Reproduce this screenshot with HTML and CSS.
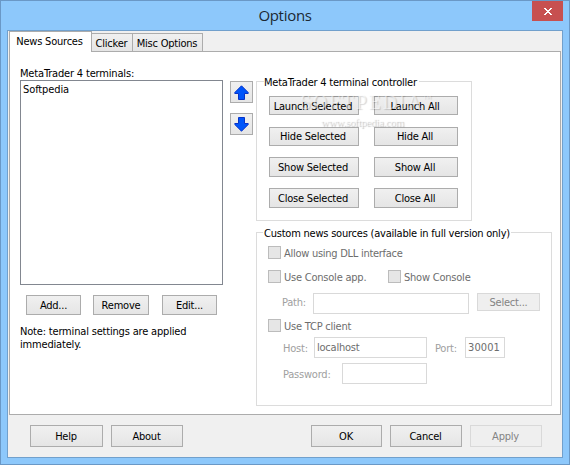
FILE: index.html
```html
<!DOCTYPE html>
<html lang="en">
<head>
<meta charset="utf-8">
<title>Options</title>
<link rel="stylesheet" href="styles.css">
</head>
<body>
<div class="window">
  <header class="titlebar">
    <h1>Options</h1>
    <button class="close" aria-label="Close"><svg width="8" height="7" viewBox="0 0 8 7" shape-rendering="crispEdges"><path fill="#fff" d="M0 0h2v1h1v1h2v-1h1v-1h2v1h-1v1h-1v1h-1v1h1v1h1v1h1v1h-2v-1h-1v-1h-2v1h-1v1h-2v-1h1v-1h1v-1h1v-1h-1v-1h-1v-1h-1z"/></svg></button>
  </header>
  <main class="client">
    <nav class="tabs">
      <span class="tab active">News Sources</span>
      <span class="tab clicker">Clicker</span>
      <span class="tab misc">Misc Options</span>
    </nav>
    <div class="page">
      <section class="left">
        <label class="list-label">MetaTrader 4 terminals:</label>
        <div class="list">Softpedia</div>
        <div class="list-actions">
          <button class="btn">Add...</button>
          <button class="btn remove">Remove</button>
          <button class="btn">Edit...</button>
        </div>
        <p class="note">Note: terminal settings are applied<br>immediately.</p>
      </section>
      <div class="arrows">
        <button class="btn arrow" aria-label="Up"><svg width="15" height="15" viewBox="0 0 15 15"><path fill="#0055fa" stroke="#0632c8" d="M7.5 .8L14.2 7.5V8.5H10.5V14.5H4.5V8.5H.8V7.5Z"/></svg></button>
        <button class="btn arrow" aria-label="Down"><svg width="15" height="15" viewBox="0 0 15 15"><path fill="#0055fa" stroke="#0632c8" d="M7.5 14.2L14.2 7.5V6.5H10.5V.5H4.5V6.5H.8V7.5Z"/></svg></button>
      </div>
      <div class="right">
        <section class="group controller">
          <h2>MetaTrader 4 terminal controller</h2>
          <div class="grid">
            <button class="btn">Launch Selected</button><button class="btn">Launch All</button>
            <button class="btn">Hide Selected</button><button class="btn">Hide All</button>
            <button class="btn">Show Selected</button><button class="btn">Show All</button>
            <button class="btn">Close Selected</button><button class="btn">Close All</button>
          </div>
          <div class="mark"><div class="mark-name">SOFTPEDIA<sup>™</sup></div><div class="mark-url">www.softpedia.com</div></div>
        </section>
        <section class="group custom">
          <h2>Custom news sources (available in full version only)</h2>
          <div class="row dll"><i class="check"></i><span class="text">Allow using DLL interface</span></div>
          <div class="row console"><i class="check"></i><span class="text use">Use Console app.</span><i class="check"></i><span class="text">Show Console</span></div>
          <div class="row path"><span class="dim">Path:</span><div class="field"></div><button class="btn off select">Select...</button></div>
          <div class="row tcp"><i class="check"></i><span class="text">Use TCP client</span></div>
          <div class="row host"><span class="dim">Host:</span><div class="field">localhost</div><span class="dim port">Port:</span><div class="field num">30001</div></div>
          <div class="row pass"><span class="dim">Password:</span><div class="field"></div></div>
        </section>
      </div>
    </div>
    <footer class="footer">
      <button class="btn help">Help</button>
      <button class="btn">About</button>
      <button class="btn ok">OK</button>
      <button class="btn">Cancel</button>
      <button class="btn off">Apply</button>
    </footer>
  </main>
</div>
</body>
</html>
```
FILE: styles.css
```css
* { box-sizing: border-box; }
body { margin: 0; font: 11px/13px "DejaVu Sans Condensed", "DejaVu Sans", sans-serif; font-stretch: condensed; letter-spacing: -.22px; color: #000; white-space: nowrap; }
h1, h2, p { margin: 0; font-weight: normal; }
button { font: inherit; letter-spacing: inherit; color: inherit; padding: 0; margin: 0; }
.window { width: 570px; height: 465px; border: 1px solid #6a98c6; background: #8dc8fb; padding: 0 6px; }
.titlebar { height: 29px; display: flex; justify-content: center; position: relative; }
h1 { font: 15px/29px "Open Sans", sans-serif; letter-spacing: -.3px; color: #1c2833; }
.close { position: absolute; right: 0; top: 0; width: 31px; height: 20px; border: 0; background: #c75050; display: flex; align-items: center; justify-content: center; }
.client { height: 428px; border: 1px solid #71a0cc; background: #f0f0f0; padding: 0 1px; }
.tabs { display: flex; align-items: flex-end; height: 21px; position: relative; margin-bottom: -1px; }
.tab { height: 19px; border: 1px solid #acacac; border-left-width: 0; background: linear-gradient(#f0f0f0, #e5e5e5); text-align: center; line-height: 19px; }
.tab.active { width: 83px; height: 21px; border-left-width: 1px; border-bottom: 0; background: #fff; line-height: 19px; padding-right: 2px; }
.clicker { width: 41px; padding-right: 1px; }
.misc { width: 70px; padding-right: 1px; }
.page { height: 364px; border: 1px solid #acacac; background: #fff; display: flex; padding: 0 8px 0 10px; }
.left { width: 203px; padding-top: 15px; }
.list-label { display: block; height: 13px; letter-spacing: -.17px; }
.list { height: 205px; border: 1px solid #828790; padding: 2px; letter-spacing: -.1px; }
.list-actions { display: flex; gap: 12px; padding: 10px 0 0 6px; }
.btn { height: 20px; border: 1px solid #acacac; background: linear-gradient(#f0f0f0, #e5e5e5); display: flex; align-items: center; justify-content: center; }
.list-actions .btn { width: 55px; }
.list-actions .remove { width: 56px; margin-right: 1px; }
.note { padding-top: 10px; letter-spacing: -.18px; }
.arrows { width: 23px; margin-left: 7px; padding-top: 29px; display: grid; gap: 10px; align-content: start; }
.arrow { height: 22px; }
.right { margin-left: 3px; padding-top: 29px; }
.group { border: 1px solid #dcdcdc; position: relative; }
.group h2 { font: inherit; width: max-content; height: 13px; margin-top: -6px; background: #fff; }
.controller { width: 216px; height: 140px; }
.controller h2 { margin-left: 7px; padding-right: 2px; }
.grid { display: grid; grid-template-columns: 90px 84px; grid-template-rows: 20px 19px 20px 20px; column-gap: 15px; row-gap: 11px; padding: 7px 0 0 12px; }
.grid .btn { padding-right: 2px; }
.grid .btn:nth-child(-n+4) { height: 19px; }
.grid .btn:nth-child(-n+2) { padding-top: 1px; }
.custom { width: 296px; height: 174px; margin-top: 11px; color: #6d6d6d; }
.custom h2 { margin-left: 6px; color: #000; padding: 0 1px; }
.row { display: flex; align-items: center; padding-left: 11px; }
.text { height: 13px; line-height: 15px; }
.check { width: 13px; height: 13px; border: 1px solid #bcbcbc; background: #e6e6e6; margin-right: 3px; }
.dll { margin-top: 6px; }
.dll .text { letter-spacing: -.27px; }
.console { margin-top: 11px; }
.use { width: 104px; }
.path { margin-top: 10px; align-items: flex-start; height: 21px; padding-left: 25px; }
.path .dim { width: 31px; padding-top: 2px; }
.dim { color: #a0a0a0; line-height: 15px; }
.field { width: 156px; height: 21px; border: 1px solid #d9d9d9; padding: 3px 2px; }
.off { color: #838383; border-color: #d9d9d9; background: #efefef; }
.select { width: 63px; height: 18px; margin-left: 8px; }
.tcp { margin-top: 5px; }
.host { margin-top: 5px; padding-left: 26px; }
.host .dim { width: 31px; padding-top: 1px; }
.host .field { width: 113px; }
.host .port { margin-left: 8px; width: 30px; line-height: 17px; }
.host .num { width: 40px; letter-spacing: .1px; }
.pass { margin-top: 5px; padding-left: 26px; }
.pass .dim { width: 59px; padding-top: 1px; }
.pass .field { width: 85px; }
.footer { display: flex; gap: 8px; padding: 10px 0 0 21px; }
.footer .btn { width: 72px; height: 22px; padding-right: 1px; }
.footer .help { width: 73px; }
.footer .ok { width: 71px; margin-left: 120px; }
.mark { position: absolute; left: 43px; top: 10px; width: 140px; color: rgba(255,255,255,.5); text-shadow: 1px 1px 1px rgba(0,0,0,.16); pointer-events: none; }
.mark-name { font: 20px/20px "Liberation Serif", serif; letter-spacing: 1.7px; }
.mark-name sup { font-size: 9px; line-height: 1px; letter-spacing: 0; }
.mark-url { font: 11px/12px "Liberation Serif", serif; letter-spacing: -.3px; margin: 4px 0 0 21px; text-shadow: 1px 1px 1px rgba(0,0,0,.25); }
```
